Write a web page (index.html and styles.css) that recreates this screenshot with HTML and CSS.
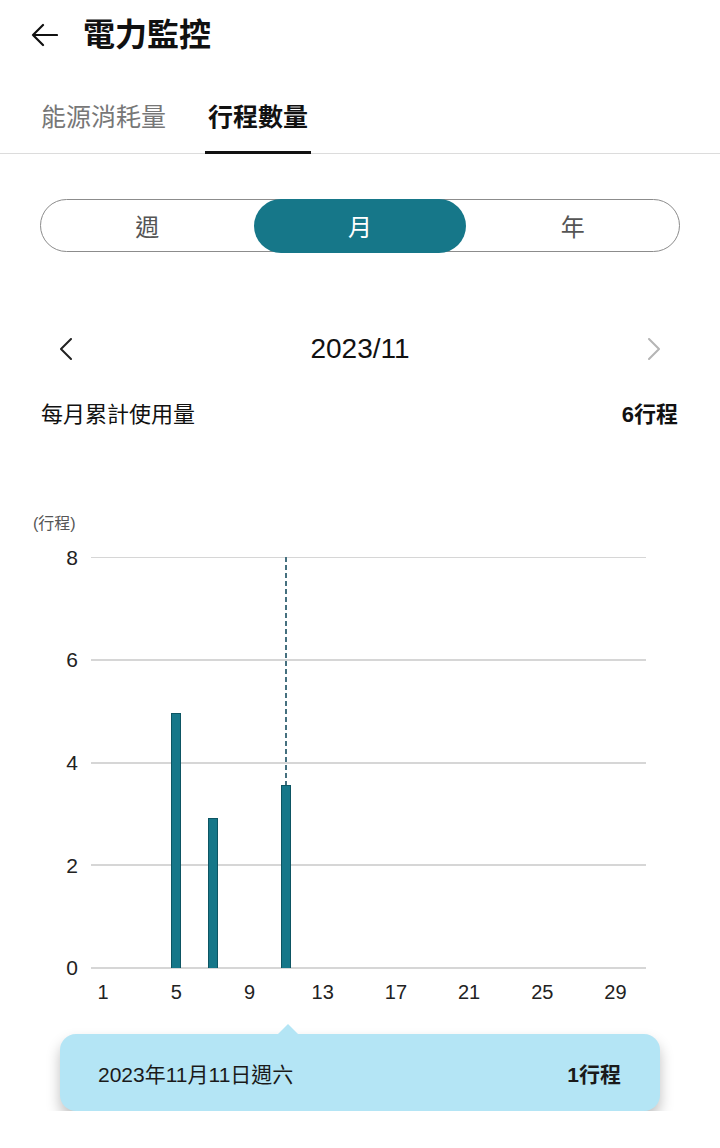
FILE: index.html
```html
<!DOCTYPE html>
<html lang="zh-Hant">

<head>
    <meta charset="UTF-8">
    <meta name="viewport" content="width=device-width, initial-scale=1.0">
    <title>電力監控</title>
    <link rel="stylesheet" href="styles.css">
</head>

<body>
    <header class="top-bar">
        <svg class="back-icon" width="28" height="24" viewBox="0 0 28 24" fill="none" stroke="#111" stroke-width="2.2" stroke-linecap="round" stroke-linejoin="round">
            <path d="M27 12H3M13 2L3 12l10 10" />
        </svg>
        <h1>電力監控</h1>
    </header>

    <nav class="tabs">
        <div class="tab">能源消耗量</div>
        <div class="tab active">行程數量</div>
    </nav>

    <div class="segment">
        <div class="segment-item">週</div>
        <div class="segment-item active">月</div>
        <div class="segment-item">年</div>
    </div>

    <div class="month-nav">
        <svg width="12" height="22" viewBox="0 0 12 22" fill="none" stroke="#222" stroke-width="2" stroke-linecap="round" stroke-linejoin="round">
            <path d="M11 1L1 11l10 10" />
        </svg>
        <span class="month-label">2023/11</span>
        <svg width="12" height="22" viewBox="0 0 12 22" fill="none" stroke="#b5b5b5" stroke-width="2" stroke-linecap="round" stroke-linejoin="round">
            <path d="M1 1l10 10L1 21" />
        </svg>
    </div>

    <div class="summary">
        <span>每月累計使用量</span>
        <strong>6行程</strong>
    </div>

    <section class="chart">
        <div class="chart-unit">(行程)</div>
        <div class="chart-body">
            <div class="y-axis">
                <span class="y-label">8</span>
                <span class="y-label">6</span>
                <span class="y-label">4</span>
                <span class="y-label">2</span>
                <span class="y-label">0</span>
            </div>
            <div class="plot" id="plot"></div>
            <div></div>
            <div class="x-axis" id="x-axis"></div>
        </div>
    </section>

    <div class="tooltip">
        <span>2023年11月11日週六</span>
        <strong>1行程</strong>
    </div>

    <script>
        const values = { 5: 4.95, 7: 2.9, 11: 3.55 };
        const selectedDay = 11;
        const unit = 51.25;

        const plot = document.getElementById('plot');
        const xAxis = document.getElementById('x-axis');

        for (let day = 1; day <= 30; day++) {
            const col = document.createElement('div');
            col.className = 'day' + (day === selectedDay ? ' selected' : '');
            if (day === selectedDay) {
                const guide = document.createElement('div');
                guide.className = 'guide';
                col.appendChild(guide);
            }
            if (values[day]) {
                const bar = document.createElement('div');
                bar.className = 'bar';
                bar.style.height = `${values[day] * unit}px`;
                col.appendChild(bar);
            }
            plot.appendChild(col);

            const label = document.createElement('span');
            label.className = 'x-label';
            label.textContent = (day - 1) % 4 === 0 ? day : '';
            xAxis.appendChild(label);
        }
    </script>
</body>

</html>
```

FILE: styles.css
```css
body {
    margin: 0;
    font-family: "Liberation Sans", "Noto Sans CJK TC", sans-serif;
    color: #111;
    background: #fff;
}

.top-bar {
    display: flex;
    align-items: center;
    height: 70px;
    padding-left: 30px;
}

.top-bar h1 {
    margin: 0 0 0 25px;
    font-size: 32px;
    font-weight: bold;
    line-height: 40px;
}

.tabs {
    display: flex;
    gap: 36px;
    padding-left: 38px;
    border-bottom: 1px solid #dcdcdc;
}

.tab {
    padding: 29px 3px 16px;
    font-size: 25px;
    line-height: 36px;
    color: #777;
    border-bottom: 3px solid transparent;
    margin-bottom: -1px;
}

.tab.active {
    color: #111;
    font-weight: bold;
    border-bottom-color: #111;
}

.segment {
    display: grid;
    grid-template-columns: repeat(3, 1fr);
    height: 51px;
    margin: 45px 40px 0;
    border: 1.5px solid #8c8c8c;
    border-radius: 28px;
}

.segment-item {
    display: flex;
    align-items: center;
    justify-content: center;
    font-size: 24px;
    color: #555;
}

.segment-item.active {
    margin: -1.5px 0;
    background: #167789;
    color: #fff;
    border-radius: 28px;
}

.month-nav {
    display: flex;
    align-items: center;
    justify-content: space-between;
    height: 60px;
    margin-top: 67px;
    padding: 0 60px;
}

.month-label {
    font-size: 28px;
    color: #111;
}

.summary {
    display: flex;
    align-items: center;
    justify-content: space-between;
    height: 36px;
    margin-top: 15px;
    padding: 0 42px 0 41px;
    font-size: 22px;
}

.summary strong {
    font-weight: bold;
}

.chart {
    margin-top: 84px;
    padding-left: 33px;
}

.chart-unit {
    font-size: 16px;
    line-height: 20px;
    color: #555;
}

.chart-body {
    display: grid;
    grid-template-columns: 58px 555px;
    margin-top: 23px;
}

.y-axis {
    display: flex;
    flex-direction: column;
    justify-content: space-between;
    padding-right: 13px;
    height: 412px;
}

.y-label {
    display: flex;
    align-items: center;
    justify-content: flex-end;
    height: 1.5px;
    font-size: 21px;
    color: #222;
}

.plot {
    display: flex;
    height: 412px;
    padding: 0 3px;
    background: repeating-linear-gradient(to bottom, #d6d6d6 0 1.5px, transparent 1.5px 102.5px);
}

.day {
    flex: 1;
    min-width: 0;
    display: flex;
    flex-direction: column;
    align-items: center;
    justify-content: flex-end;
    padding-bottom: 1px;
}

.guide {
    flex: 1;
    width: 2px;
    background: repeating-linear-gradient(to bottom, #45707f 0 5px, transparent 5px 8px);
}

.bar {
    width: 8px;
    background: #167789;
    border: 1px solid #0d5563;
    border-bottom: none;
}

.x-axis {
    display: flex;
    padding: 0 3px;
    margin-top: 11px;
}

.x-label {
    flex: 1;
    width: 0;
    min-width: 0;
    display: flex;
    justify-content: center;
    font-size: 20px;
    line-height: 24px;
    color: #222;
    white-space: nowrap;
}

.tooltip {
    position: relative;
    display: flex;
    align-items: center;
    justify-content: space-between;
    height: 77px;
    margin: 30px 60px 0;
    padding: 0 39px 0 38px;
    background: #b4e5f5;
    border-radius: 16px;
    box-shadow: 0 8px 14px rgba(0, 0, 0, 0.25);
    font-size: 21px;
    color: #1a1a1a;
}

.tooltip::before {
    content: "";
    position: absolute;
    top: -10px;
    left: 218px;
    border-left: 10px solid transparent;
    border-right: 10px solid transparent;
    border-bottom: 10px solid #b4e5f5;
}

.tooltip strong {
    font-weight: bold;
}
```
